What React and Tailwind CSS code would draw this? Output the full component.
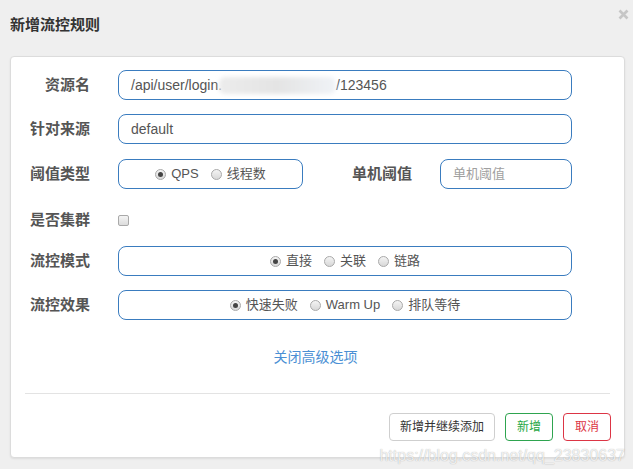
import React from 'react';

const LABEL = 'w-[79px] shrink-0 text-right text-[15px] leading-[20px] font-bold text-[#555]';
const BOX = 'h-[30px] rounded-[8px] border border-[#3a7cbf] bg-white';

function Radio({ checked, label }) {
  return (
    <span className="flex items-center">
      <span className="w-[11px] h-[11px] rounded-full border border-[#a9a9a9] bg-gradient-to-b from-[#f4f4f4] to-[#d8d8d8] grid place-items-center">
        {checked && <span className="w-[5px] h-[5px] rounded-full bg-[#444]" />}
      </span>
      <span className="ml-[5px] text-[13px] text-[#555]">{label}</span>
    </span>
  );
}

function RadioGroup({ items, checked }) {
  return (
    <div className="flex items-center justify-center gap-[12px] h-full">
      {items.map((t) => (
        <Radio key={t} label={t} checked={t === checked} />
      ))}
    </div>
  );
}

export default function App() {
  return (
    <div className="relative w-[633px] h-[469px] overflow-hidden bg-[#efefef] font-['Liberation_Sans','Noto_Sans_CJK_SC',sans-serif]">
      {/* Header */}
      <div className="pt-[15px] pl-[10px] h-[56px]">
        <h4 className="text-[15px] leading-[20px] font-bold text-[#333]">新增流控规则</h4>
      </div>
      <svg className="absolute left-[618px] top-[9px]" width="11" height="11" viewBox="0 0 11 11">
        <path d="M1.5 1.5L9.5 9.5M9.5 1.5L1.5 9.5" stroke="#c6c6c6" strokeWidth="2.6" />
      </svg>

      {/* Panel */}
      <div className="ml-[10px] w-[615px] h-[402px] bg-white border border-[#dcdcdc] rounded-[4px] shadow-[0_1px_2px_rgba(0,0,0,0.08)] flex flex-col">
        <div className="flex items-center gap-[28px] mt-[13px]">
          <div className={LABEL}>资源名</div>
          <div className={`${BOX} w-[454px] flex items-center pl-[12px] text-[14px] text-[#555]`}>
            <span>/api/user/login.</span>
            <span className="ml-[-3px] w-[117px] h-[17px] rounded-[6px] bg-gradient-to-r from-[#ececec] via-[#e4e4e4] to-[#f0f3f7] blur-[2px]" />
            <span>/123456</span>
          </div>
        </div>

        <div className="flex items-center gap-[28px] mt-[14px]">
          <div className={LABEL}>针对来源</div>
          <div className={`${BOX} w-[454px] flex items-center pl-[12px] text-[14px] text-[#555]`}>default</div>
        </div>

        <div className="flex items-center gap-[28px] mt-[15px]">
          <div className={LABEL}>阈值类型</div>
          <div className="flex items-center w-[454px]">
            <div className={`${BOX} w-[185px]`}>
              <RadioGroup items={['QPS', '线程数']} checked="QPS" />
            </div>
            <div className="flex-1 text-right text-[15px] font-bold text-[#555]">单机阈值</div>
            <div className={`${BOX} ml-[28px] w-[132px] flex items-center pl-[12px] text-[13px] text-[#a0a0a0]`}>单机阈值</div>
          </div>
        </div>

        <div className="flex items-center gap-[28px] mt-[16px] h-[30px]">
          <div className={LABEL}>是否集群</div>
          <span className="w-[11px] h-[11px] rounded-[2px] border border-[#a9a9a9] bg-gradient-to-b from-[#f4f4f4] to-[#dcdcdc]" />
        </div>

        <div className="flex items-center gap-[28px] mt-[11px]">
          <div className={LABEL}>流控模式</div>
          <div className={`${BOX} w-[454px]`}>
            <RadioGroup items={['直接', '关联', '链路']} checked="直接" />
          </div>
        </div>

        <div className="flex items-center gap-[28px] mt-[14px]">
          <div className={LABEL}>流控效果</div>
          <div className={`${BOX} w-[454px]`}>
            <RadioGroup items={['快速失败', 'Warm Up', '排队等待']} checked="快速失败" />
          </div>
        </div>

        <div className="mt-[27px] text-center text-[14px] leading-[20px] text-[#4a8fd4] pr-[4px]">关闭高级选项</div>

        <div className="mx-[14px] mt-[26px] border-t border-[#e3e3e3]" />

        <div className="flex justify-end gap-[10px] mt-[19px] pr-[13px]">
          <button className="h-[28px] px-[10px] rounded-[4px] border border-[#cfcfcf] bg-white text-[12px] text-[#333]">新增并继续添加</button>
          <button className="h-[28px] w-[48px] rounded-[4px] border border-[#2ea44f] bg-white text-[12px] text-[#28a745]">新增</button>
          <button className="h-[28px] w-[48px] rounded-[4px] border border-[#dc3545] bg-white text-[12px] text-[#dc3545]">取消</button>
        </div>
      </div>

      {/* Watermark */}
      <div className="absolute right-[8px] top-[444px] text-[16px] leading-[24px] text-white/80 [text-shadow:0_0_1px_rgba(0,0,0,0.35)] font-['Liberation_Sans',sans-serif]">
        https://blog.csdn.net/qq_23830637
      </div>
    </div>
  );
}
